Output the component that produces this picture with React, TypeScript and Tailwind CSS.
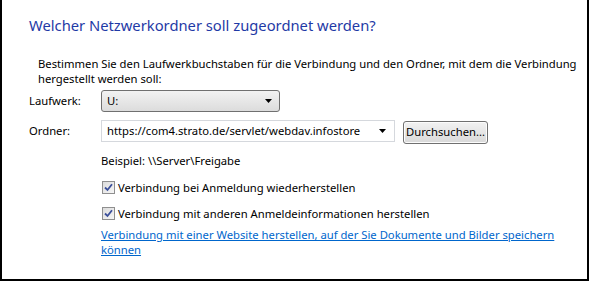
import React from "react";

function Check() {
  return (
    <span className="w-[13px] h-[13px] border border-[#8f8f8f] bg-gradient-to-br from-[#dcdcdc] to-[#f6f6f6] flex items-center justify-center shrink-0">
      <svg width="9" height="9" viewBox="0 0 9 9">
        <path d="M1 4.5 L3.5 7 L8 1.2" fill="none" stroke="#3b4f9a" strokeWidth="1.8" />
      </svg>
    </span>
  );
}

function Arrow() {
  return (
    <svg width="8" height="4" viewBox="0 0 8 4">
      <path d="M0 0 H7 L3.5 4 Z" fill="#000" />
    </svg>
  );
}

export default function App() {
  const font = { fontFamily: '"Noto Sans", "Open Sans", sans-serif' };
  return (
    <div
      className="w-[589px] h-[281px] bg-white border-l-2 border-r-2 border-b-2 border-black text-[11.25px] text-black whitespace-nowrap"
      style={font}
    >
      <div className="pl-[27px] pt-[15px] text-[14.75px] leading-[20px] text-[#1f3aa6]">
        Welcher Netzwerkordner soll zugeordnet werden?
      </div>
      <div className="pl-[36px] mt-[21px] leading-[15px]">
        Bestimmen Sie den Laufwerkbuchstaben für die Verbindung und den Ordner, mit dem die Verbindung
        <br />
        hergestellt werden soll:
      </div>
      <div className="pl-[27px] mt-[4px] flex items-center h-[22px]">
        <span className="w-[72px]">Laufwerk:</span>
        <div className="w-[179px] h-[22px] rounded-[3px] border border-[#707070] bg-gradient-to-b from-[#f2f2f2] to-[#dcdcdc] flex items-center justify-between pl-[5px] pr-[6px]">
          <span>U:</span>
          <Arrow />
        </div>
      </div>
      <div className="pl-[27px] mt-[8px] flex items-start">
        <span className="w-[72px] h-[22px] flex items-center">Ordner:</span>
        <div className="w-[294px] h-[22px] border border-[#d5d8dd] flex items-center justify-between pl-[5px] pr-[7px]">
          <span>https://com4.strato.de/servlet/webdav.infostore</span>
          <Arrow />
        </div>
        <div className="ml-[8px] mt-[1px] w-[85px] h-[23px] rounded-[3px] border border-[#707070] bg-gradient-to-b from-[#f2f2f2] to-[#d9d9d9] flex items-center justify-center shadow-[inset_0_0_0_1px_#fcfcfc]">
          Durchsuchen...
        </div>
      </div>
      <div className="pl-[99px] mt-[9px] leading-[15px]">Beispiel: \\Server\Freigabe</div>
      <div className="pl-[100px] mt-[12px] flex items-center gap-[3px] leading-[15px]">
        <Check />
        <span>Verbindung bei Anmeldung wiederherstellen</span>
      </div>
      <div className="pl-[100px] mt-[11px] flex items-center gap-[3px] leading-[15px]">
        <Check />
        <span>Verbindung mit anderen Anmeldeinformationen herstellen</span>
      </div>
      <div className="pl-[99px] mt-[6px] leading-[15px] text-[#0066cc] underline">
        Verbindung mit einer Website herstellen, auf der Sie Dokumente und Bilder speichern
        <br />
        können
      </div>
    </div>
  );
}
